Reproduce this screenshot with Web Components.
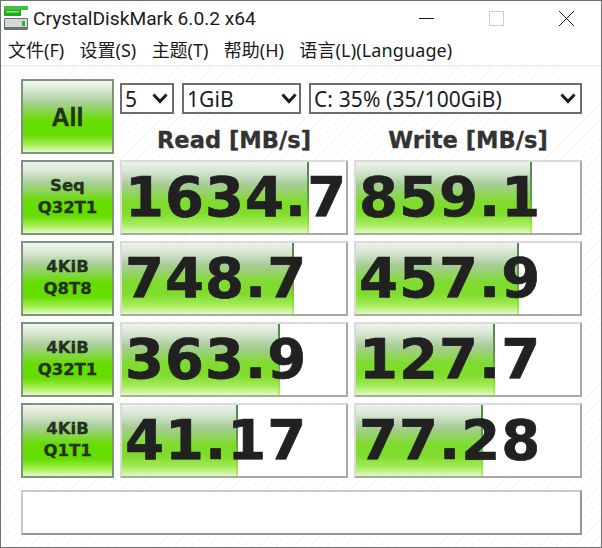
<!DOCTYPE html>
<html>
<head>
<meta charset="utf-8">
<title>CrystalDiskMark</title>
<style>
  html, body { margin: 0; padding: 0; background: #fff; }
  body { width: 602px; height: 548px; overflow: hidden; }
</style>
</head>
<body>
<cdm-window>
  <cdm-titlebar slot="title" text="CrystalDiskMark 6.0.2 x64"></cdm-titlebar>
  <cdm-menubar slot="menu"></cdm-menubar>

  <cdm-button slot="all" big>All</cdm-button>
  <cdm-select slot="count" text="5"></cdm-select>
  <cdm-select slot="size" text="1GiB" style="padding-right:2px"></cdm-select>
  <cdm-select slot="drive" text="C: 35% (35/100GiB)"></cdm-select>
  <cdm-heading slot="read">Read [MB/s]</cdm-heading>
  <cdm-heading slot="write">Write [MB/s]</cdm-heading>

  <cdm-button slot="b1">Seq<br>Q32T1</cdm-button>
  <cdm-score slot="r1" value="1634.7" fill="187"></cdm-score>
  <cdm-score slot="w1" value="859.1" fill="176"></cdm-score>

  <cdm-button slot="b2">4KiB<br>Q8T8</cdm-button>
  <cdm-score slot="r2" value="748.7" fill="172"></cdm-score>
  <cdm-score slot="w2" value="457.9" fill="163"></cdm-score>

  <cdm-button slot="b3">4KiB<br>Q32T1</cdm-button>
  <cdm-score slot="r3" value="363.9" fill="158"></cdm-score>
  <cdm-score slot="w3" value="127.7" fill="139"></cdm-score>

  <cdm-button slot="b4">4KiB<br>Q1T1</cdm-button>
  <cdm-score slot="r4" value="41.17" fill="116"></cdm-score>
  <cdm-score slot="w4" value="77.28" fill="127"></cdm-score>

  <cdm-comment slot="comment"></cdm-comment>
</cdm-window>

<script>
class CdmWindow extends HTMLElement {
  constructor() {
    super();
    this.attachShadow({ mode: "open" });
    this.shadowRoot.innerHTML = `
      <style>
        :host {
          display: flex;
          flex-direction: column;
          box-sizing: border-box;
          width: 602px;
          height: 548px;
          border: 1px solid #6f6f6f;
          background: #fff;
        }
        .body {
          flex: 1;
          display: grid;
          grid-template-columns: 93px 228px 228px;
          grid-template-rows: 75px 75px 75px 75px 75px 51px;
          column-gap: 6px;
          row-gap: 6px;
          padding: 12px 19px 0 20px;
          border-top: 2px solid #f0f0f0;
          background: repeating-linear-gradient(135deg, #fff 0, #fff 5px, #f8f8f8 5px, #f8f8f8 6px);
        }
        .controls {
          grid-column: 2 / 4;
          display: flex;
          flex-direction: column;
        }
        .selects {
          display: grid;
          grid-template-columns: 54px 119px 273px;
          justify-content: space-between;
          margin-top: 4px;
          height: 31px;
        }
        .heads {
          display: grid;
          grid-template-columns: 228px 228px;
          column-gap: 6px;
          margin-top: 11px;
        }
        .wide { grid-column: 1 / 4; margin-top: 6px; }
      </style>
      <slot name="title"></slot>
      <slot name="menu"></slot>
      <div class="body">
        <slot name="all"></slot>
        <div class="controls">
          <div class="selects">
            <slot name="count"></slot><slot name="size"></slot><slot name="drive"></slot>
          </div>
          <div class="heads">
            <slot name="read"></slot><slot name="write"></slot>
          </div>
        </div>
        <slot name="b1"></slot><slot name="r1"></slot><slot name="w1"></slot>
        <slot name="b2"></slot><slot name="r2"></slot><slot name="w2"></slot>
        <slot name="b3"></slot><slot name="r3"></slot><slot name="w3"></slot>
        <slot name="b4"></slot><slot name="r4"></slot><slot name="w4"></slot>
        <div class="wide"><slot name="comment"></slot></div>
      </div>
    `;
  }
}

class CdmTitlebar extends HTMLElement {
  constructor() {
    super();
    this.attachShadow({ mode: "open" });
    this.shadowRoot.innerHTML = `
      <style>
        :host {
          display: flex;
          align-items: center;
          box-sizing: border-box;
          height: 32px;
          padding: 2px 0 0 3px;
          background: #fff;
          color: #1a1a1a;
          font: 19.2px Roboto, sans-serif;
        }
        .name { margin-left: 5px; flex: 1; white-space: nowrap; }
        .btn { width: 70px; height: 30px; display: flex; align-items: center; justify-content: center; }
        svg { display: block; }
      </style>
      <svg width="24" height="24" viewBox="0 0 24 24">
        <rect x="0" y="0" width="24" height="4" fill="#3fc23a"/>
        <rect x="0" y="4" width="17" height="6" fill="#22a81f"/>
        <rect x="2" y="5" width="13" height="1.5" fill="#8ce67f"/>
        <rect x="0" y="12" width="24" height="12" rx="1" fill="#6d7270"/>
        <rect x="1" y="13" width="22" height="8" fill="#d4d8d6"/>
        <rect x="18" y="15" width="3" height="5" fill="#35a83a"/>
      </svg>
      <span class="name"></span>
      <div class="btn">
        <svg width="15" height="15" viewBox="0 0 15 15"><path d="M0 7.5H15" stroke="#1a1a1a" fill="none"/></svg>
      </div>
      <div class="btn">
        <svg width="15" height="15" viewBox="0 0 15 15"><rect x=".5" y=".5" width="14" height="14" stroke="#cfcfcf" fill="none"/></svg>
      </div>
      <div class="btn">
        <svg width="15" height="15" viewBox="0 0 15 15"><path d="M0 0L15 15M15 0L0 15" stroke="#1a1a1a" fill="none"/></svg>
      </div>
    `;
    this.shadowRoot.querySelector(".name").textContent = this.getAttribute("text");
  }
}

class CdmMenubar extends HTMLElement {
  constructor() {
    super();
    this.attachShadow({ mode: "open" });
    const items = ["文件(F)", "设置(S)", "主题(T)", "帮助(H)", "语言(L)(Language)"];
    this.shadowRoot.innerHTML = `
      <style>
        :host {
          display: flex;
          align-items: center;
          gap: 15.4px;
          height: 32px;
          padding-left: 7px;
          background: #fff;
          color: #1a1a1a;
          font: 18px "Noto Sans", "Noto Sans CJK SC", sans-serif;
          white-space: nowrap;
        }
        span:last-child { letter-spacing: 0.12px; }
      </style>
      ${items.map(t => `<span>${t}</span>`).join("")}
    `;
  }
}

class CdmButton extends HTMLElement {
  constructor() {
    super();
    this.attachShadow({ mode: "open" });
    this.shadowRoot.innerHTML = `
      <style>
        :host {
          display: flex;
          align-items: center;
          justify-content: center;
          box-sizing: border-box;
          height: 75px;
          padding-bottom: 2px;
          border: 2px solid #7f9280;
          text-align: center;
          color: #24311f;
          font: bold 16.5px/22px "DejaVu Sans", sans-serif;
          -webkit-text-stroke: 0.3px #24311f;
          background: linear-gradient(#f0f5ef 0%, #dbe8d6 12%, #a9cf98 30%, #66dd00 56%, #66dd00 76%, #a5ee55 90%, #e6fbc8 100%);
        }
        :host([big]) {
          padding: 2px 0 0;
          font: bold 25px/25px "Liberation Sans", sans-serif;
        }
      </style>
      <div><slot></slot></div>
    `;
  }
}

class CdmSelect extends HTMLElement {
  constructor() {
    super();
    this.attachShadow({ mode: "open" });
    this.shadowRoot.innerHTML = `
      <style>
        :host {
          display: flex;
          align-items: center;
          justify-content: space-between;
          box-sizing: border-box;
          height: 31px;
          padding: 0 4px 0 3px;
          border: 2px solid #6d6d6d;
          background: #fff;
          color: #1c1c1c;
          font: 21px "Noto Sans", sans-serif;
          letter-spacing: 0.1px;
          white-space: nowrap;
        }
        svg { display: block; flex: none; }
      </style>
      <span class="val"></span>
      <svg width="16" height="11" viewBox="0 0 16 11"><path d="M1.5 1.5L8 8.5L14.5 1.5" stroke="#1c1c1c" stroke-width="3" fill="none"/></svg>
    `;
    this.shadowRoot.querySelector(".val").textContent = this.getAttribute("text");
  }
}

class CdmHeading extends HTMLElement {
  constructor() {
    super();
    this.attachShadow({ mode: "open" });
    this.shadowRoot.innerHTML = `
      <style>
        :host {
          display: block;
          text-align: center;
          color: #333;
          font: bold 22.6px/30px "DejaVu Sans", sans-serif;
          -webkit-text-stroke: 0.3px #333;
        }
      </style>
      <slot></slot>
    `;
  }
}

class CdmScore extends HTMLElement {
  constructor() {
    super();
    this.attachShadow({ mode: "open" });
    this.shadowRoot.innerHTML = `
      <style>
        :host {
          display: grid;
          box-sizing: border-box;
          height: 75px;
          border: 2px solid;
          border-color: #dadada #a8a8a8 #a8a8a8 #dadada;
          background: #fff;
          overflow: visible;
        }
        .bar, .num { grid-area: 1 / 1; }
        .bar {
          justify-self: start;
          background:
            linear-gradient(#4c8a48 0%, #5f9c4c 50%, #7fdc2c 80%, #b8f070 100%) right / 2px 100% no-repeat,
            linear-gradient(#edf3ec 0%, #d5e4d0 14%, #a6cc95 32%, #7fdc2c 56%, #7fdc2c 72%, #a6ec5c 88%, #e0fbc0 100%);
        }
        .num {
          color: #212121;
          font: bold 56px/69px "DejaVu Sans", sans-serif;
          -webkit-text-stroke: 0.7px #212121;
          letter-spacing: 1px;
          padding-left: 3px;
          white-space: nowrap;
        }
      </style>
      <div class="bar"></div>
      <div class="num"></div>
    `;
  }
  connectedCallback() {
    this.shadowRoot.querySelector(".bar").style.width = this.getAttribute("fill") + "px";
    this.shadowRoot.querySelector(".num").textContent = this.getAttribute("value");
  }
}

class CdmComment extends HTMLElement {
  constructor() {
    super();
    this.attachShadow({ mode: "open" });
    this.shadowRoot.innerHTML = `
      <style>
        :host {
          display: block;
          box-sizing: border-box;
          height: 45px;
          border: 2px solid;
          border-color: #c8c8c8 #969696 #969696 #c8c8c8;
          background: #fff;
        }
      </style>
    `;
  }
}

customElements.define("cdm-window", CdmWindow);
customElements.define("cdm-titlebar", CdmTitlebar);
customElements.define("cdm-menubar", CdmMenubar);
customElements.define("cdm-button", CdmButton);
customElements.define("cdm-select", CdmSelect);
customElements.define("cdm-heading", CdmHeading);
customElements.define("cdm-score", CdmScore);
customElements.define("cdm-comment", CdmComment);
</script>
</body>
</html>
